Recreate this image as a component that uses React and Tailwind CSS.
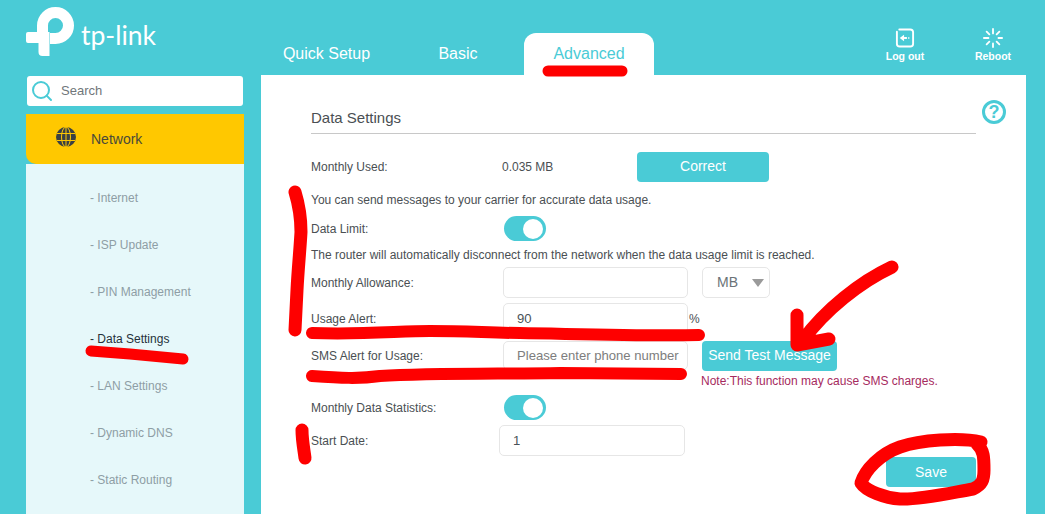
import { Search } from 'lucide-react';

const menuItems = ['Internet', 'ISP Update', 'PIN Management', 'Data Settings', 'LAN Settings', 'Dynamic DNS', 'Static Routing'];

function Logo() {
  return (
    <svg width="50" height="50" viewBox="26 7 50 50" className="shrink-0">
      <path d="M42.5 38V25.5a13 13 0 1 1 13 13H50" fill="none" stroke="#fff" strokeWidth="11" />
      <path d="M28 32h21.5v24h-7a4 4 0 0 1-4-4v-9H28a2 2 0 0 1-2-2v-7a2 2 0 0 1 2-2z" fill="#fff" />
    </svg>
  );
}

function GlobeIcon() {
  return (
    <svg width="20" height="20" viewBox="0 0 20 20" className="mb-[4px] shrink-0">
      <circle cx="10" cy="10" r="10" fill="#3a4044" />
      <g fill="none" stroke="#ffc800" strokeWidth="1">
        <ellipse cx="10" cy="10" rx="4.5" ry="10" />
        <path d="M10 0v20M0.8 6.5h18.4M0.8 13.5h18.4" />
      </g>
    </svg>
  );
}

function LogoutIcon() {
  return (
    <svg width="20" height="20" viewBox="0 0 20 21" fill="none" stroke="#fff">
      <path d="M4 1.5h11.5a3 3 0 0 1 3 3v12a3 3 0 0 1-3 3H4.5a3 3 0 0 1-3-3V4" strokeWidth="2" strokeLinecap="round" />
      <path d="M12 10.5H9M14.5 10.5h-1" strokeWidth="2" />
      <path d="M4.5 10.5L9 7v7z" fill="#fff" stroke="none" />
    </svg>
  );
}

function RebootIcon() {
  return (
    <svg width="20" height="20" viewBox="0 0 22 22" fill="none" stroke="#fff" strokeWidth="2" strokeLinecap="round">
      <path d="M11 1v5M11 17v4M1 11h5M17 11h4M4 4l3 3M15 15l3 3M18 4l-3 3M7 15l-3 3" />
    </svg>
  );
}

function Toggle() {
  return (
    <div className="ml-[2px] flex h-[25px] w-[42px] items-center justify-end rounded-full bg-[#4acbd6] pr-[3px]">
      <div className="h-[20px] w-[20px] rounded-full bg-white" />
    </div>
  );
}

function TextInput({ value, placeholder, className = 'h-[31px] w-[185px]' }) {
  return (
    <input
      type="text"
      readOnly
      value={value}
      placeholder={placeholder}
      className={`rounded-[5px] border border-[#e6e6e6] bg-white pl-[13px] text-[13.1px] text-[#4a5358] outline-none placeholder:text-[#7d7d7d] ${className}`}
    />
  );
}

function Scribbles() {
  return (
    <svg width="1045" height="514" viewBox="0 0 1045 514" fill="none" stroke="#fe0000" strokeLinecap="round" strokeLinejoin="round" className="pointer-events-none absolute left-0 top-0">
      <path d="M548 71h74" strokeWidth="11" />
      <path d="M295 192C299 205 301 218 301 232C300 250 298 270 297 290L295 330" strokeWidth="13" />
      <path d="M91 351L130 354L183 359" strokeWidth="11" />
      <path d="M312 333C360 335 400 331 430 331C470 331 490 333 520 333C580 334 640 336 699 335" strokeWidth="12" />
      <path d="M312 376C340 378 360 379 380 376C430 373 500 374 560 373L681 374" strokeWidth="12" />
      <path d="M892 267C860 282 825 310 803 340M797 315L797 345L829 339" strokeWidth="13" />
      <path d="M302 430C302 440 304 450 305 458" strokeWidth="13" />
      <path d="M981 442C960 437 920 440 900 447C880 454 865 470 861 483C866 491 885 498 900 499C920 500 950 493 973 489C982 485 984 480 984 470C984 458 984 450 977 444" strokeWidth="13" />
    </svg>
  );
}

export default function App() {
  return (
    <div className="relative h-[514px] w-[1045px] overflow-hidden bg-[#4acbd6] font-['Liberation_Sans',Arial,sans-serif] text-[12px] text-[#4a4f53]">
      {/* Header */}
      <div className="flex h-[75px] items-start">
        <div className="flex w-[261px] items-start pl-[26px] pt-[7px]">
          <Logo />
          <span className="ml-[5px] mt-[11px] font-['Lato',sans-serif] text-[26.5px] leading-[34px] text-white">tp-link</span>
        </div>
        <div className="mt-[33px] flex h-[42px] text-[16px] text-white">
          <div className="flex w-[131px] items-center justify-center">Quick Setup</div>
          <div className="flex w-[132px] items-center justify-center">Basic</div>
          <div className="flex w-[130px] items-center justify-center rounded-t-[12px] bg-white text-[#4acbd6]">Advanced</div>
        </div>
        <div className="ml-[207px] mt-[28px] flex text-[10.5px] font-bold text-white">
          <div className="flex w-[88px] flex-col items-center gap-px">
            <LogoutIcon />
            <span>Log out</span>
          </div>
          <div className="flex w-[88px] flex-col items-center gap-px">
            <RebootIcon />
            <span>Reboot</span>
          </div>
        </div>
      </div>

      <div className="flex h-[439px] pl-[26px]">
        {/* Sidebar */}
        <div className="flex w-[218px] flex-col">
          <div className="mx-px mt-px flex h-[30px] items-center rounded-[3px] bg-white pl-[3px] text-[13px] text-[#70767a]">
            <Search size={24} strokeWidth={2} className="text-[#4acbd6]" />
            <span className="ml-[7px]">Search</span>
          </div>
          <div className="mt-[8px] flex h-[50px] items-center rounded-bl-[10px] bg-[#ffc800] pl-[30px] text-[14px] text-[#4a4a3a]">
            <GlobeIcon />
            <span className="ml-[15px]">Network</span>
          </div>
          <div className="flex-1 bg-[#e6f8fa] pl-[64px] pt-[10px]">
            {menuItems.map((item) => (
              <div key={item} className={`flex h-[47px] items-center ${item === 'Data Settings' ? 'text-[#25323a]' : 'text-[#8e9ea5]'}`}>
                - {item}
              </div>
            ))}
          </div>
        </div>

        {/* Main panel */}
        <div className="relative ml-[17px] w-[765px] bg-white pl-[50px]">
          <div className="absolute right-[20px] top-[25px] flex h-[24px] w-[24px] items-center justify-center rounded-full border-[3px] border-[#4acbd6] text-[18px] font-bold text-[#4acbd6]">?</div>

          <div className="h-[59px] w-[665px] border-b border-[#c8c8c8] pt-[34px] text-[15px] leading-[18px]">Data Settings</div>

          <div className="mt-[18px] flex h-[30px] items-center">
            <div className="w-[191px]">Monthly Used:</div>
            <div className="w-[135px]">0.035 MB</div>
            <button className="h-[30px] w-[132px] rounded-[4px] bg-[#4acbd6] pb-[2px] text-[14px] text-white">Correct</button>
          </div>

          <div className="mt-[9px] h-[18px] leading-[18px]">You can send messages to your carrier for accurate data usage.</div>

          <div className="mt-[7px] flex h-[25px] items-center">
            <div className="w-[191px]">Data Limit:</div>
            <Toggle />
          </div>

          <div className="mt-[5px] h-[18px] leading-[18px]">The router will automatically disconnect from the network when the data usage limit is reached.</div>

          <div className="mt-[3px] flex h-[31px] items-center">
            <div className="w-[192px]">Monthly Allowance:</div>
            <TextInput value="" />
            <div className="ml-[14px] flex h-[31px] w-[68px] items-center justify-between rounded-[5px] border border-[#e6e6e6] pl-[14px] pr-[5px] text-[14px] text-[#6b7378]">
              MB
              <svg width="12" height="8" viewBox="0 0 12 8"><path d="M0 0h12L6 8z" fill="#9a9a9a" /></svg>
            </div>
          </div>

          <div className="mt-[5px] flex h-[31px] items-center">
            <div className="w-[192px]">Usage Alert:</div>
            <TextInput value="90" />
            <span className="ml-px">%</span>
          </div>

          <div className="mt-[7px] flex h-[31px] items-start">
            <div className="w-[192px] pt-[6px]">SMS Alert for Usage:</div>
            <TextInput value="" placeholder="Please enter phone number" className="h-[29px] w-[185px]" />
            <button className="ml-[14px] h-[30px] w-[135px] rounded-[4px] bg-[#4acbd6] pb-[2px] text-[14px] text-white">Send Test Message</button>
          </div>

          <div className="h-[18px] pl-[390px] leading-[18px] text-[#a62a5e]">Note:This function may cause SMS charges.</div>

          <div className="mt-[5px] flex h-[25px] items-center">
            <div className="w-[191px]">Monthly Data Statistics:</div>
            <Toggle />
          </div>

          <div className="mt-[5px] flex h-[31px] items-center">
            <div className="w-[188px]">Start Date:</div>
            <TextInput value="1" className="h-[31px] w-[186px]" />
          </div>

          <div className="mt-px flex w-[665px] justify-end">
            <button className="h-[30px] w-[90px] rounded-[4px] bg-[#4acbd6] text-[14px] text-white">Save</button>
          </div>
        </div>
      </div>

      <Scribbles />
    </div>
  );
}
